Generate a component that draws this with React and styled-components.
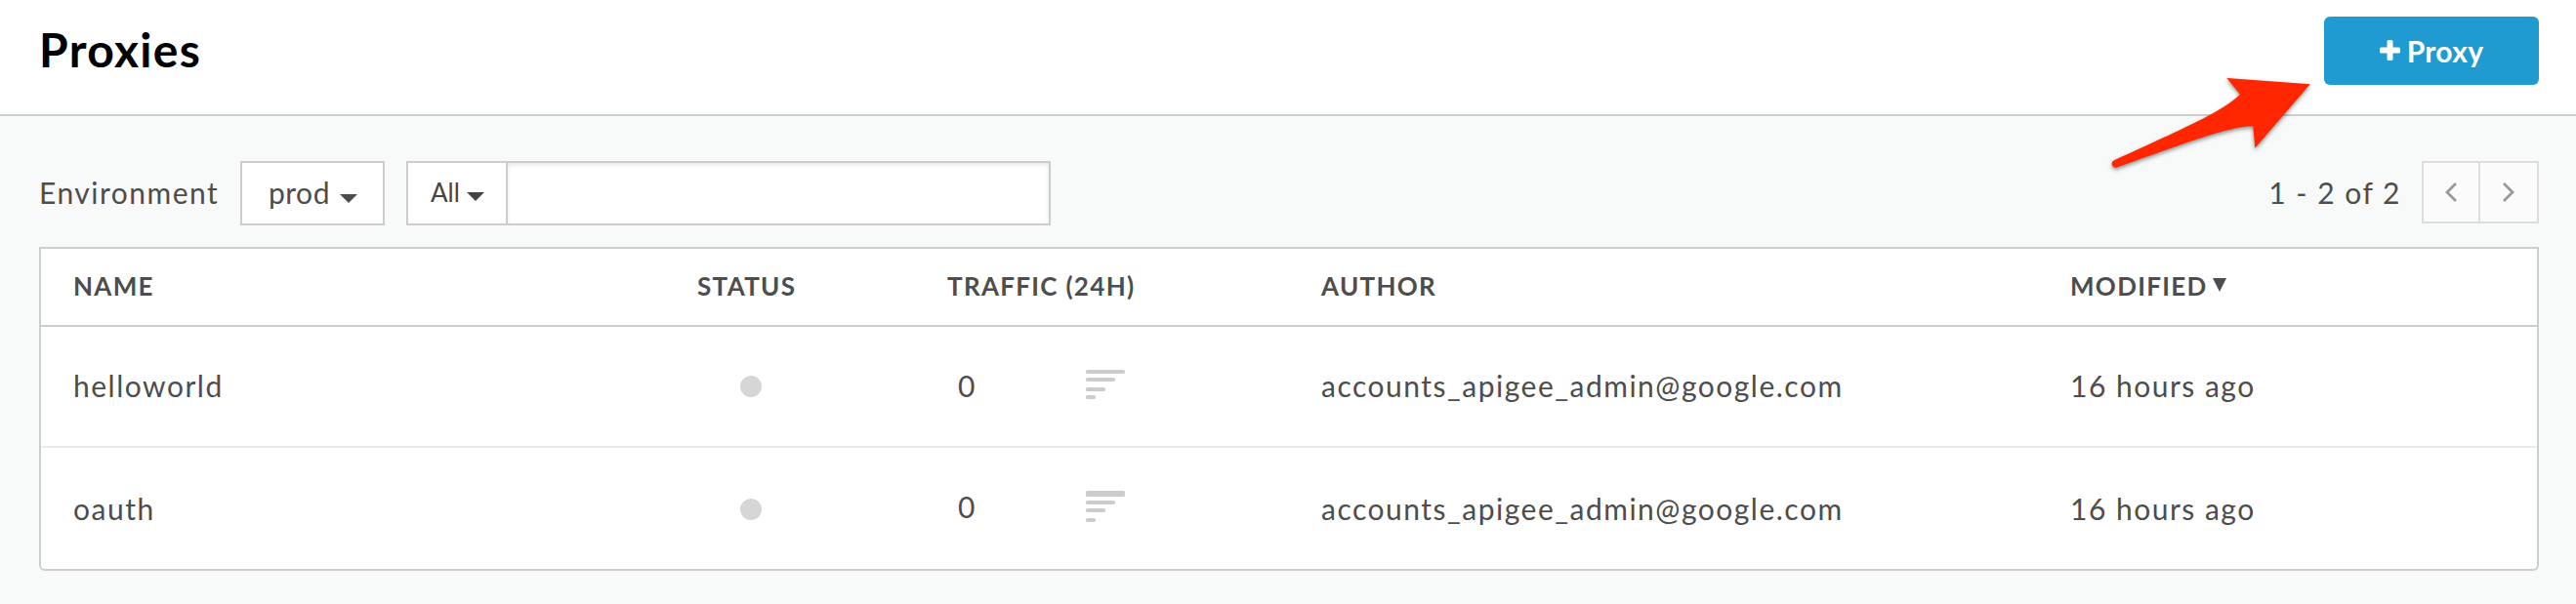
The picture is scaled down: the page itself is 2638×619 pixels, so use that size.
import React from "react";
import styled, { createGlobalStyle } from "styled-components";

const GlobalStyle = createGlobalStyle`
  *, *::before, *::after { box-sizing: border-box; }
  body {
    margin: 0;
    background: #f8faf9;
    color: #4d4d4d;
    font-family: Lato, "Liberation Sans", sans-serif;
    font-size: 30px;
    line-height: 36px;
    letter-spacing: 1.5px;
  }
  button, input { font: inherit; color: inherit; letter-spacing: inherit; margin: 0; }
`;

const Page = styled.div`
  position: relative;
  min-height: 619px;
`;

const Header = styled.header`
  display: flex;
  justify-content: space-between;
  align-items: flex-start;
  height: 119px;
  padding: 17px 38px 0 40px;
  background: #fff;
  border-bottom: 2px solid #cccecd;
`;

const Title = styled.h1`
  margin: 5px 0 0;
  color: #000;
  font-size: 48px;
  line-height: 58px;
  font-weight: 700;
  letter-spacing: 1.3px;
`;

const PrimaryButton = styled.button`
  display: flex;
  align-items: center;
  justify-content: center;
  gap: 7px;
  width: 220px;
  height: 70px;
  padding: 0 0 1px;
  border: 0;
  border-radius: 6px;
  background: #1f9bd1;
  color: #fff;
  font-weight: 700;
  letter-spacing: 0.3px;
`;

const Content = styled.main`
  padding: 46px 38px 34px 40px;
`;

const Toolbar = styled.div`
  display: flex;
  align-items: flex-start;
  height: 88px;
`;

const Label = styled.span`
  width: 206px;
  padding-top: 14px;
`;

const Dropdown = styled.button`
  display: flex;
  align-items: flex-start;
  width: ${(p) => p.$width}px;
  height: 66px;
  padding: ${(p) => (p.$compact ? "14px 0 0 23px" : "12px 0 0 27px")};
  gap: ${(p) => (p.$compact ? 7 : 10)}px;
  border: 2px solid #cccccc;
  background: #fff;
  font-size: ${(p) => (p.$compact ? 26 : 30)}px;
  line-height: ${(p) => (p.$compact ? 32 : 36)}px;
  letter-spacing: ${(p) => (p.$compact ? 0 : 0.5)}px;
  color: ${(p) => (p.$compact ? "#444" : "#4d4d4d")};
`;

const Caret = styled.svg`
  display: block;
  margin-top: ${(p) => p.$top}px;
`;

const SearchGroup = styled.div`
  display: flex;
  width: 660px;
  margin-left: 22px;
`;

const SearchInput = styled.input`
  flex: 1;
  min-width: 0;
  height: 66px;
  padding: 0 16px;
  border: 2px solid #cccccc;
  border-left: 0;
  border-radius: 0;
  background: #fff;
  box-shadow: inset 0 2px 4px rgba(0, 0, 0, 0.1);
  outline: 0;
`;

const Pagination = styled.div`
  display: flex;
  margin-left: auto;
`;

const PageCount = styled.span`
  padding: 14px 21px 0 0;
`;

const PageButton = styled.button`
  display: flex;
  align-items: center;
  justify-content: center;
  width: ${(p) => (p.$last ? 62 : 58)}px;
  height: 64px;
  padding: 0 0 0 1px;
  border: 2px solid #dddddd;
  border-right-width: ${(p) => (p.$last ? 2 : 0)}px;
  background: #fbfbfb;
`;

const Table = styled.section`
  height: 332px;
  border: 2px solid #cccecd;
  border-radius: 0 0 6px 6px;
  background: #fff;
`;

const Columns = styled.div`
  display: grid;
  grid-template-columns: 639px 256px 383px 767px 1fr;
  padding-left: 33px;
`;

const HeadRow = styled(Columns)`
  height: 80px;
  padding-top: 22px;
  border-bottom: 2px solid #cccecd;
  font-size: 26px;
  line-height: 32px;
  letter-spacing: 1.3px;
  font-weight: 700;
`;

const HeadCell = styled.div`
  display: flex;
  gap: 5px;
  white-space: nowrap;
`;

const Row = styled(Columns)`
  height: 124px;
  border-bottom: ${(p) => (p.$last ? 0 : 2)}px solid #ebebeb;
  padding-top: ${(p) => (p.$last ? 44 : 42)}px;
`;

const Cell = styled.div`
  white-space: nowrap;
`;

const StatusDot = styled.span`
  display: block;
  width: 22px;
  height: 22px;
  margin: 8px 0 0 44px;
  border-radius: 50%;
  background: #d6d6d6;
`;

const Traffic = styled.div`
  display: flex;
  align-items: flex-start;
  padding-left: 11px;
  margin-top: ${(p) => (p.$raised ? -2 : 0)}px;
`;

const TrafficValue = styled.span`
  width: 131px;
`;

const BarsSvg = styled.svg`
  margin-top: 2px;
`;

const Arrow = styled.svg`
  position: absolute;
  left: 2150px;
  top: 70px;
  pointer-events: none;
  filter: drop-shadow(0 2px 2px rgba(0, 0, 0, 0.45));
`;

const DownCaret = ({ top }) => (
  <Caret $top={top} width="18" height="9" viewBox="0 0 18 9" aria-hidden="true">
    <path d="M0 0H18L9 9Z" fill="currentColor" />
  </Caret>
);

const PlusIcon = () => (
  <svg width="21" height="21" viewBox="0 0 21 21" aria-hidden="true">
    <path
      d="M9 0h3q1.5 0 1.5 1.5v6h6q1.5 0 1.5 1.5v3q0 1.5-1.5 1.5h-6v6q0 1.5-1.5 1.5h-3q-1.5 0-1.5-1.5v-6h-6q-1.5 0-1.5-1.5v-3q0-1.5 1.5-1.5h6v-6q0-1.5 1.5-1.5Z"
      fill="currentColor"
    />
  </svg>
);

const Chevron = ({ right }) => (
  <svg width="14" height="22" viewBox="0 0 14 22" aria-hidden="true">
    <path
      d={right ? "M1 2L10 11L1 20" : "M11 2L2 11L11 20"}
      fill="none"
      stroke="#999"
      strokeWidth="2.8"
    />
  </svg>
);

const TrafficBars = ({ bars }) => (
  <BarsSvg width="40" height="34" viewBox="0 0 40 34" fill="#cbcccd" aria-hidden="true">
    {bars.map(([y, width, height]) => (
      <rect key={y} x="0" y={y} width={width} height={height} rx="1.6" />
    ))}
  </BarsSvg>
);

const proxies = [
  {
    name: "helloworld",
    traffic: 0,
    author: "accounts_apigee_admin@google.com",
    modified: "16 hours ago",
    bars: [[0, 40, 4], [8, 30, 4], [18, 20, 4], [26, 10, 4]],
  },
  {
    name: "oauth",
    traffic: 0,
    author: "accounts_apigee_admin@google.com",
    modified: "16 hours ago",
    bars: [[0, 40, 6], [10, 30, 4], [18, 20, 4], [28, 10, 4]],
  },
];

export default function App() {
  return (
    <Page>
      <GlobalStyle />
      <Header>
        <Title>Proxies</Title>
        <PrimaryButton>
          <PlusIcon />
          Proxy
        </PrimaryButton>
      </Header>
      <Content>
        <Toolbar>
          <Label>Environment</Label>
          <Dropdown $width={148}>
            prod
            <DownCaret top={20} />
          </Dropdown>
          <SearchGroup>
            <Dropdown $width={104} $compact>
              All
              <DownCaret top={16} />
            </Dropdown>
            <SearchInput aria-label="Search" />
          </SearchGroup>
          <Pagination>
            <PageCount>1 - 2 of 2</PageCount>
            <PageButton aria-label="Previous"><Chevron /></PageButton>
            <PageButton $last aria-label="Next"><Chevron right /></PageButton>
          </Pagination>
        </Toolbar>
        <Table>
          <HeadRow>
            <HeadCell>NAME</HeadCell>
            <HeadCell>STATUS</HeadCell>
            <HeadCell>TRAFFIC (24H)</HeadCell>
            <HeadCell>AUTHOR</HeadCell>
            <HeadCell>
              MODIFIED
              <svg width="14" height="32" viewBox="0 0 14 32" aria-hidden="true">
                <path d="M0 8H14L7 22Z" fill="currentColor" />
              </svg>
            </HeadCell>
          </HeadRow>
          {proxies.map((proxy, i) => (
            <Row key={proxy.name} $last={i === proxies.length - 1}>
              <Cell>{proxy.name}</Cell>
              <StatusDot />
              <Traffic $raised={i === 1}>
                <TrafficValue>{proxy.traffic}</TrafficValue>
                <TrafficBars bars={proxy.bars} />
              </Traffic>
              <Cell>{proxy.author}</Cell>
              <Cell>{proxy.modified}</Cell>
            </Row>
          ))}
        </Table>
      </Content>
      <Arrow width="230" height="110" viewBox="0 0 230 110" aria-hidden="true">
        <path
          d="M215.7 16.3L130.3 10L144 26.7C126 44 92 59 15 94.3A3.8 3.8 0 0 0 18.3 101.3C73 82 131 59 157.3 59.3L159.3 81.7Z"
          fill="#ff2600"
        />
      </Arrow>
    </Page>
  );
}
